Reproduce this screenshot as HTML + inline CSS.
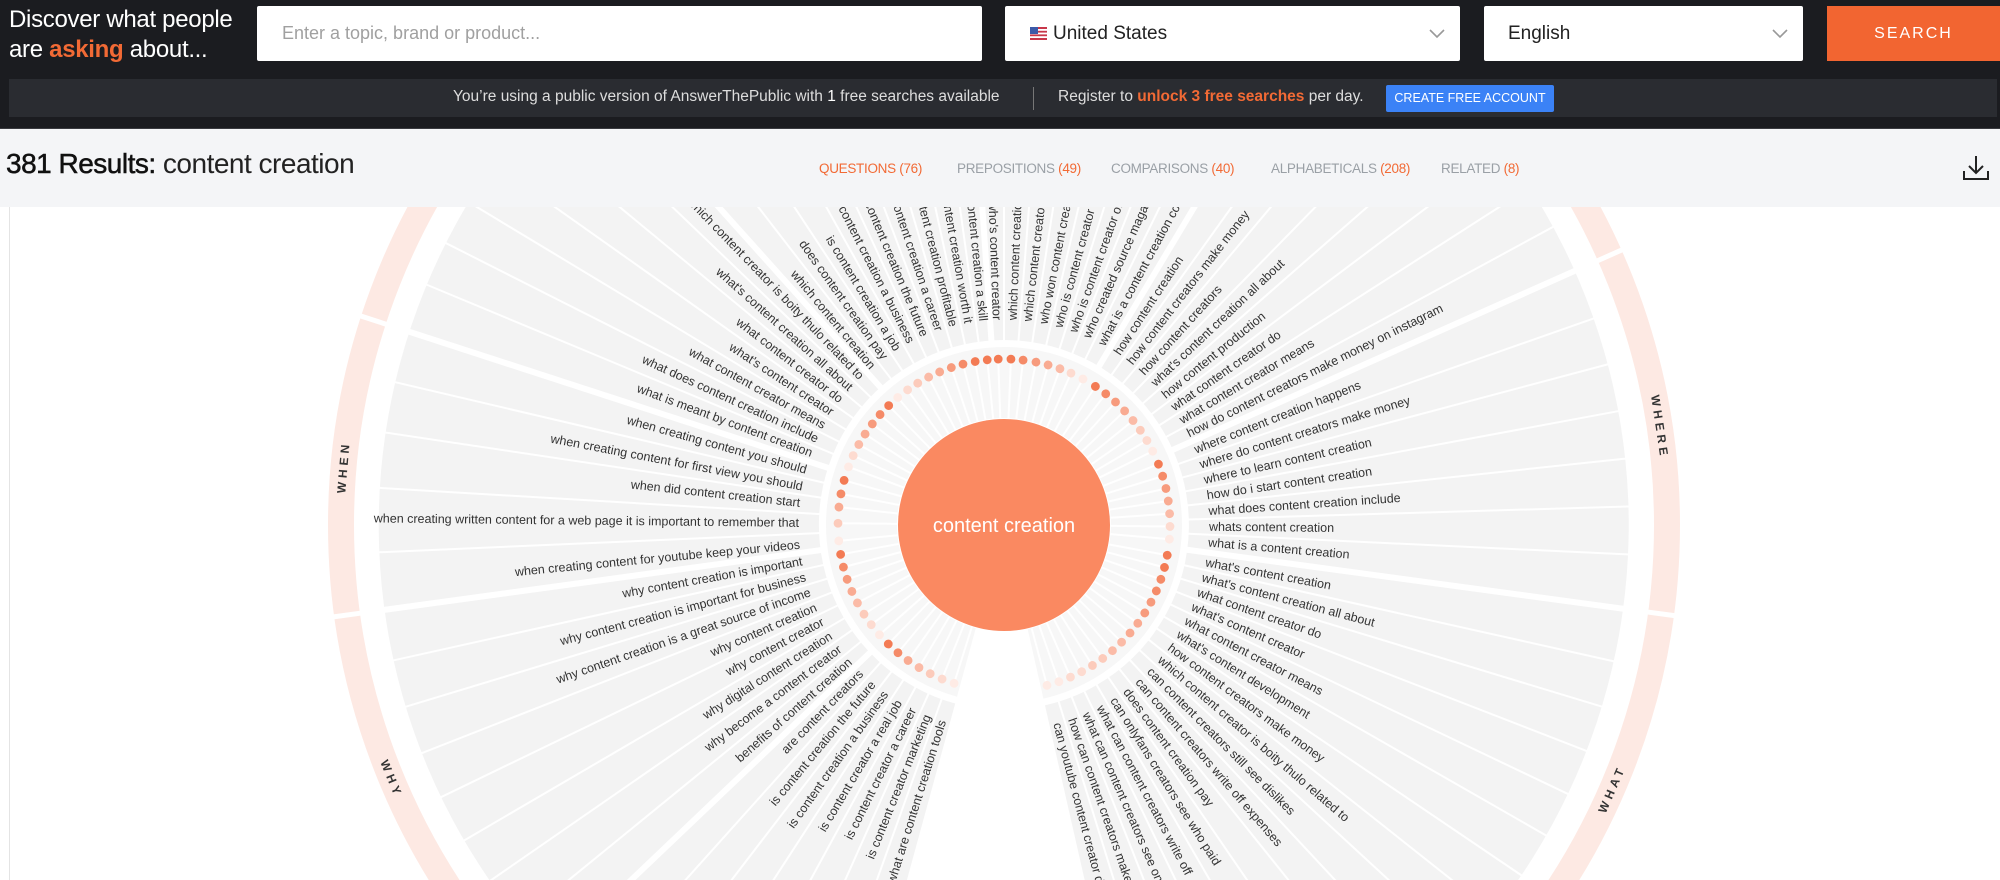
<!DOCTYPE html>
<html><head><meta charset="utf-8"><style>
*{margin:0;padding:0;box-sizing:border-box}
html,body{width:2000px;height:880px;overflow:hidden}
body{background:#fff;font-family:"Liberation Sans",sans-serif;position:relative}
.abs{position:absolute}
#hdr{left:0;top:0;width:2000px;height:128px;background:#1b1c20}
.box{background:#fff;border-radius:2px;top:6px;height:55px}
#info{left:9px;top:79px;width:1988px;height:38px;background:#2a2c31}
#sub{left:0;top:128px;width:2000px;height:79px;background:#f4f5f7;border-top:1px solid #3a3b40}
.tab{top:161px;font-size:13.5px;color:#9aa0a6;letter-spacing:-0.3px}
.tab b{font-weight:normal;color:#f26a35}
svg text{font-family:"Liberation Sans",sans-serif;font-size:12.5px;fill:#333}
svg text.l{text-anchor:end}
</style></head><body>
<div id="hdr" class="abs"></div>
<div class="abs" style="left:9px;top:5px;color:#fff;font-size:24px;line-height:30px;letter-spacing:-0.3px">Discover what people<br>are <span style="color:#f26a35;font-weight:bold">asking</span> about...</div>
<div class="abs box" style="left:257px;width:725px"><span class="abs" style="left:25px;top:17px;font-size:18px;color:#a0a0a0">Enter a topic, brand or product...</span></div>
<div class="abs box" style="left:1005px;width:455px">
<svg class="abs" style="left:25px;top:21px" width="17" height="13" viewBox="0 0 17 13"><rect width="17" height="13" fill="#c8374a"/><rect y="2" width="17" height="1.8" fill="#fff"/><rect y="5.6" width="17" height="1.8" fill="#fff"/><rect y="9.2" width="17" height="1.8" fill="#fff"/><rect width="8" height="7" fill="#3c5aa8"/></svg>
<span class="abs" style="left:48px;top:17px;font-size:19px;color:#222">United States</span>
<svg class="abs" style="left:424px;top:23px" width="16" height="10"><polyline points="1,1 8,8 15,1" fill="none" stroke="#999" stroke-width="1.6"/></svg></div>
<div class="abs box" style="left:1484px;width:319px"><span class="abs" style="left:24px;top:17px;font-size:19px;color:#222">English</span>
<svg class="abs" style="left:288px;top:23px" width="16" height="10"><polyline points="1,1 8,8 15,1" fill="none" stroke="#999" stroke-width="1.6"/></svg></div>
<div class="abs" style="left:1827px;top:6px;width:173px;height:55px;background:#f26531;color:#fff;font-size:16px;letter-spacing:2px;text-align:center;line-height:55px">SEARCH</div>
<div id="info" class="abs"></div>
<div class="abs" style="left:453px;top:88px;font-size:15.5px;color:#ddd">You’re using a public version of AnswerThePublic with <b style="color:#fff;font-weight:normal">1</b> free searches available</div>
<div class="abs" style="left:1033px;top:87px;width:1px;height:23px;background:#777"></div>
<div class="abs" style="left:1058px;top:88px;font-size:15.5px;color:#ddd">Register to <b style="color:#f26a35">unlock 3 free searches</b> per day.</div>
<div class="abs" style="left:1386px;top:85px;width:168px;height:27px;background:#3b82f6;border-radius:2px;color:#fff;font-size:12.5px;text-align:center;line-height:27px">CREATE FREE ACCOUNT</div>
<div id="sub" class="abs"></div>
<div class="abs" style="left:6px;top:148px;font-size:28px;color:#222;letter-spacing:-0.5px"><span style="color:#111;-webkit-text-stroke:0.5px #111">381 Results:</span> content creation</div>
<div class="abs tab" style="left:819px;color:#f26a35">QUESTIONS (76)</div>
<div class="abs tab" style="left:957px">PREPOSITIONS <b>(49)</b></div>
<div class="abs tab" style="left:1111px">COMPARISONS <b>(40)</b></div>
<div class="abs tab" style="left:1271px">ALPHABETICALS <b>(208)</b></div>
<div class="abs tab" style="left:1441px">RELATED <b>(8)</b></div>
<svg class="abs" style="left:1962px;top:154px" width="28" height="28"><path d="M14 2 V19 M7 12 L14 19 L21 12 M2 17 V25 H26 V17" fill="none" stroke="#222" stroke-width="2"/></svg>
<div class="abs" style="left:9px;top:207px;width:1px;height:673px;background:#e4e4e4"></div>

<svg class="abs" style="left:0;top:207px" width="2000" height="673" viewBox="0 207 2000 673">
<defs>
<line id="sep" x1="1184" y1="525" x2="1636" y2="525" stroke="#fff" stroke-width="2"/>
<line id="sepT" x1="1184" y1="525" x2="1636" y2="525" stroke="#fff" stroke-width="6"/>
<line id="sp" x1="1111" y1="525" x2="1166" y2="525" stroke="#fff" stroke-width="2"/>
<circle id="d" cx="1170" cy="525" r="4.4"/>
</defs>
<circle cx="1004" cy="525" r="663" fill="none" stroke="#fde9e3" stroke-width="26"/>
<g stroke="#fff" stroke-width="5">
<line x1="1650" y1="525" x2="1690" y2="525" transform="rotate(-24 1004 525)"/>
<line x1="1650" y1="525" x2="1690" y2="525" transform="rotate(7.7 1004 525)"/>
<line x1="1650" y1="525" x2="1690" y2="525" transform="rotate(172.2 1004 525)"/>
<line x1="1650" y1="525" x2="1690" y2="525" transform="rotate(198 1004 525)"/>
<line x1="1650" y1="525" x2="1690" y2="525" transform="rotate(-59.1 1004 525)"/>
<line x1="1650" y1="525" x2="1690" y2="525" transform="rotate(228.1 1004 525)"/>
<line x1="1650" y1="525" x2="1690" y2="525" transform="rotate(136.4 1004 525)"/>
</g>
<g>
<text x="343.5" y="471" text-anchor="middle" transform="rotate(-85 343.5 467)" style="font-size:12px;font-weight:bold;fill:#333;letter-spacing:4px">WHEN</text>
<text x="1659.7" y="431" text-anchor="middle" transform="rotate(81.5 1659.7 427)" style="font-size:12px;font-weight:bold;fill:#333;letter-spacing:4px">WHERE</text>
<text x="1612" y="793" text-anchor="middle" transform="rotate(-66.5 1612 789)" style="font-size:12px;font-weight:bold;fill:#333;letter-spacing:4px">WHAT</text>
<text x="391.5" y="783" text-anchor="middle" transform="rotate(67.5 391.5 779)" style="font-size:12px;font-weight:bold;fill:#333;letter-spacing:4px">WHY</text>
</g>
<path d="M839.1,1127.9 A625,625 0 1 1 1142.4,1134.4 L1045,705.4 A185,185 0 1 0 955.2,703.5 Z" fill="#f3f3f3"/>
<path d="M957,696.7 A178,178 0 1 1 1043.4,698.6 L1027.7,629.3 A107,107 0 1 0 975.8,628.2 Z" fill="#f7f7f7"/>
<g>
<use href="#sep" transform="rotate(-90 1004 525)"/><use href="#sep" transform="rotate(-85.5 1004 525)"/><use href="#sep" transform="rotate(-81.2 1004 525)"/><use href="#sep" transform="rotate(-76.8 1004 525)"/><use href="#sep" transform="rotate(-72.5 1004 525)"/><use href="#sep" transform="rotate(-68.3 1004 525)"/><use href="#sep" transform="rotate(-63.9 1004 525)"/>
<use href="#sepT" transform="rotate(-59.1 1004 525)"/>
<use href="#sep" transform="rotate(-54.4 1004 525)"/><use href="#sep" transform="rotate(-50 1004 525)"/><use href="#sep" transform="rotate(-45.6 1004 525)"/><use href="#sep" transform="rotate(-41.2 1004 525)"/><use href="#sep" transform="rotate(-36.9 1004 525)"/><use href="#sep" transform="rotate(-32.7 1004 525)"/><use href="#sep" transform="rotate(-28.5 1004 525)"/>
<use href="#sepT" transform="rotate(-24 1004 525)"/>
<use href="#sep" transform="rotate(-19.3 1004 525)"/><use href="#sep" transform="rotate(-14.9 1004 525)"/><use href="#sep" transform="rotate(-10.5 1004 525)"/><use href="#sep" transform="rotate(-6.1 1004 525)"/><use href="#sep" transform="rotate(-1.7 1004 525)"/><use href="#sep" transform="rotate(2.7 1004 525)"/>
<use href="#sepT" transform="rotate(7.7 1004 525)"/>
<use href="#sep" transform="rotate(12.6 1004 525)"/><use href="#sep" transform="rotate(16.9 1004 525)"/><use href="#sep" transform="rotate(21.2 1004 525)"/><use href="#sep" transform="rotate(25.5 1004 525)"/><use href="#sep" transform="rotate(29.8 1004 525)"/><use href="#sep" transform="rotate(34.1 1004 525)"/><use href="#sep" transform="rotate(38.4 1004 525)"/><use href="#sep" transform="rotate(42.7 1004 525)"/><use href="#sep" transform="rotate(47 1004 525)"/><use href="#sep" transform="rotate(51.3 1004 525)"/><use href="#sep" transform="rotate(55.6 1004 525)"/><use href="#sep" transform="rotate(59.9 1004 525)"/><use href="#sep" transform="rotate(64.2 1004 525)"/><use href="#sep" transform="rotate(68.5 1004 525)"/><use href="#sep" transform="rotate(72.8 1004 525)"/>
<use href="#sep" transform="rotate(109.7 1004 525)"/><use href="#sep" transform="rotate(114.1 1004 525)"/><use href="#sep" transform="rotate(118.6 1004 525)"/><use href="#sep" transform="rotate(123 1004 525)"/><use href="#sep" transform="rotate(127.5 1004 525)"/><use href="#sep" transform="rotate(131.9 1004 525)"/>
<use href="#sepT" transform="rotate(136.4 1004 525)"/>
<use href="#sep" transform="rotate(140.8 1004 525)"/><use href="#sep" transform="rotate(145.3 1004 525)"/><use href="#sep" transform="rotate(149.7 1004 525)"/><use href="#sep" transform="rotate(154.2 1004 525)"/><use href="#sep" transform="rotate(158.6 1004 525)"/><use href="#sep" transform="rotate(163.1 1004 525)"/><use href="#sep" transform="rotate(167.5 1004 525)"/>
<use href="#sepT" transform="rotate(172.2 1004 525)"/>
<use href="#sep" transform="rotate(177.5 1004 525)"/><use href="#sep" transform="rotate(183.4 1004 525)"/><use href="#sep" transform="rotate(188.5 1004 525)"/><use href="#sep" transform="rotate(193.2 1004 525)"/>
<use href="#sepT" transform="rotate(198 1004 525)"/>
<use href="#sep" transform="rotate(202.6 1004 525)"/><use href="#sep" transform="rotate(206.8 1004 525)"/><use href="#sep" transform="rotate(211.1 1004 525)"/><use href="#sep" transform="rotate(215.3 1004 525)"/><use href="#sep" transform="rotate(219.6 1004 525)"/><use href="#sep" transform="rotate(223.8 1004 525)"/>
<use href="#sepT" transform="rotate(228.1 1004 525)"/>
<use href="#sep" transform="rotate(232.3 1004 525)"/><use href="#sep" transform="rotate(236.6 1004 525)"/><use href="#sep" transform="rotate(240.8 1004 525)"/><use href="#sep" transform="rotate(245.1 1004 525)"/><use href="#sep" transform="rotate(249.3 1004 525)"/><use href="#sep" transform="rotate(253.6 1004 525)"/><use href="#sep" transform="rotate(257.8 1004 525)"/><use href="#sep" transform="rotate(262.1 1004 525)"/>
<use href="#sepT" transform="rotate(266.1 1004 525)"/>
</g>
<g>
<use href="#sp" transform="rotate(268 1004 525)"/><use href="#sp" transform="rotate(-87.6 1004 525)"/><use href="#sp" transform="rotate(-83.4 1004 525)"/><use href="#sp" transform="rotate(-78.9 1004 525)"/><use href="#sp" transform="rotate(-74.6 1004 525)"/><use href="#sp" transform="rotate(-70.3 1004 525)"/><use href="#sp" transform="rotate(-66.2 1004 525)"/><use href="#sp" transform="rotate(-61.6 1004 525)"/>
<use href="#sp" transform="rotate(-56.6 1004 525)"/><use href="#sp" transform="rotate(-52.2 1004 525)"/><use href="#sp" transform="rotate(-47.8 1004 525)"/><use href="#sp" transform="rotate(-43.4 1004 525)"/><use href="#sp" transform="rotate(-39 1004 525)"/><use href="#sp" transform="rotate(-34.8 1004 525)"/><use href="#sp" transform="rotate(-30.6 1004 525)"/><use href="#sp" transform="rotate(-26.4 1004 525)"/>
<use href="#sp" transform="rotate(-21.5 1004 525)"/><use href="#sp" transform="rotate(-17.1 1004 525)"/><use href="#sp" transform="rotate(-12.7 1004 525)"/><use href="#sp" transform="rotate(-8.3 1004 525)"/><use href="#sp" transform="rotate(-3.9 1004 525)"/><use href="#sp" transform="rotate(0.5 1004 525)"/><use href="#sp" transform="rotate(4.9 1004 525)"/>
<use href="#sp" transform="rotate(10.5 1004 525)"/><use href="#sp" transform="rotate(14.8 1004 525)"/><use href="#sp" transform="rotate(19.1 1004 525)"/><use href="#sp" transform="rotate(23.4 1004 525)"/><use href="#sp" transform="rotate(27.7 1004 525)"/><use href="#sp" transform="rotate(32 1004 525)"/><use href="#sp" transform="rotate(36.3 1004 525)"/><use href="#sp" transform="rotate(40.6 1004 525)"/><use href="#sp" transform="rotate(44.9 1004 525)"/><use href="#sp" transform="rotate(49.2 1004 525)"/><use href="#sp" transform="rotate(53.5 1004 525)"/><use href="#sp" transform="rotate(57.8 1004 525)"/><use href="#sp" transform="rotate(62.1 1004 525)"/><use href="#sp" transform="rotate(66.4 1004 525)"/><use href="#sp" transform="rotate(70.7 1004 525)"/><use href="#sp" transform="rotate(75 1004 525)"/>
<use href="#sp" transform="rotate(107.5 1004 525)"/><use href="#sp" transform="rotate(111.9 1004 525)"/><use href="#sp" transform="rotate(116.4 1004 525)"/><use href="#sp" transform="rotate(120.8 1004 525)"/><use href="#sp" transform="rotate(125.3 1004 525)"/><use href="#sp" transform="rotate(129.7 1004 525)"/><use href="#sp" transform="rotate(134.2 1004 525)"/>
<use href="#sp" transform="rotate(138.6 1004 525)"/><use href="#sp" transform="rotate(143.1 1004 525)"/><use href="#sp" transform="rotate(147.5 1004 525)"/><use href="#sp" transform="rotate(152 1004 525)"/><use href="#sp" transform="rotate(156.4 1004 525)"/><use href="#sp" transform="rotate(160.9 1004 525)"/><use href="#sp" transform="rotate(165.3 1004 525)"/><use href="#sp" transform="rotate(169.8 1004 525)"/>
<use href="#sp" transform="rotate(174.5 1004 525)"/><use href="#sp" transform="rotate(180.6 1004 525)"/><use href="#sp" transform="rotate(186.2 1004 525)"/><use href="#sp" transform="rotate(190.8 1004 525)"/><use href="#sp" transform="rotate(195.6 1004 525)"/>
<use href="#sp" transform="rotate(200.5 1004 525)"/><use href="#sp" transform="rotate(204.7 1004 525)"/><use href="#sp" transform="rotate(209 1004 525)"/><use href="#sp" transform="rotate(213.2 1004 525)"/><use href="#sp" transform="rotate(217.5 1004 525)"/><use href="#sp" transform="rotate(221.7 1004 525)"/><use href="#sp" transform="rotate(226 1004 525)"/>
<use href="#sp" transform="rotate(230.2 1004 525)"/><use href="#sp" transform="rotate(234.5 1004 525)"/><use href="#sp" transform="rotate(238.7 1004 525)"/><use href="#sp" transform="rotate(243 1004 525)"/><use href="#sp" transform="rotate(247.2 1004 525)"/><use href="#sp" transform="rotate(251.5 1004 525)"/><use href="#sp" transform="rotate(255.7 1004 525)"/><use href="#sp" transform="rotate(260 1004 525)"/><use href="#sp" transform="rotate(264.2 1004 525)"/>
</g>
<g>
<use href="#d" fill="#f37b54" transform="rotate(268 1004 525)"/><use href="#d" fill="#f37b54" transform="rotate(-87.6 1004 525)"/><use href="#d" fill="#f58b68" transform="rotate(-83.4 1004 525)"/><use href="#d" fill="#f79b7d" transform="rotate(-78.9 1004 525)"/><use href="#d" fill="#f9ab92" transform="rotate(-74.6 1004 525)"/><use href="#d" fill="#fbbba7" transform="rotate(-70.3 1004 525)"/><use href="#d" fill="#fddbd0" transform="rotate(-66.2 1004 525)"/><use href="#d" fill="#feebe5" transform="rotate(-61.6 1004 525)"/>
<use href="#d" fill="#f37b54" transform="rotate(-56.6 1004 525)"/><use href="#d" fill="#f58b68" transform="rotate(-52.2 1004 525)"/><use href="#d" fill="#f79b7d" transform="rotate(-47.8 1004 525)"/><use href="#d" fill="#f9ab92" transform="rotate(-43.4 1004 525)"/><use href="#d" fill="#fbbba7" transform="rotate(-39 1004 525)"/><use href="#d" fill="#fccbbb" transform="rotate(-34.8 1004 525)"/><use href="#d" fill="#fddbd0" transform="rotate(-30.6 1004 525)"/><use href="#d" fill="#feebe5" transform="rotate(-26.4 1004 525)"/>
<use href="#d" fill="#f37b54" transform="rotate(-21.5 1004 525)"/><use href="#d" fill="#f58b68" transform="rotate(-17.1 1004 525)"/><use href="#d" fill="#f79b7d" transform="rotate(-12.7 1004 525)"/><use href="#d" fill="#f9ab92" transform="rotate(-8.3 1004 525)"/><use href="#d" fill="#fbbba7" transform="rotate(-3.9 1004 525)"/><use href="#d" fill="#fddbd0" transform="rotate(0.5 1004 525)"/><use href="#d" fill="#feebe5" transform="rotate(4.9 1004 525)"/>
<use href="#d" fill="#f37b54" transform="rotate(10.5 1004 525)"/><use href="#d" fill="#f37b54" transform="rotate(14.8 1004 525)"/><use href="#d" fill="#f58b68" transform="rotate(19.1 1004 525)"/><use href="#d" fill="#f58b68" transform="rotate(23.4 1004 525)"/><use href="#d" fill="#f79b7d" transform="rotate(27.7 1004 525)"/><use href="#d" fill="#f79b7d" transform="rotate(32 1004 525)"/><use href="#d" fill="#f9ab92" transform="rotate(36.3 1004 525)"/><use href="#d" fill="#f9ab92" transform="rotate(40.6 1004 525)"/><use href="#d" fill="#fbbba7" transform="rotate(44.9 1004 525)"/><use href="#d" fill="#fbbba7" transform="rotate(49.2 1004 525)"/><use href="#d" fill="#fccbbb" transform="rotate(53.5 1004 525)"/><use href="#d" fill="#fccbbb" transform="rotate(57.8 1004 525)"/><use href="#d" fill="#fddbd0" transform="rotate(62.1 1004 525)"/><use href="#d" fill="#fddbd0" transform="rotate(66.4 1004 525)"/><use href="#d" fill="#feebe5" transform="rotate(70.7 1004 525)"/><use href="#d" fill="#feebe5" transform="rotate(75 1004 525)"/>
<use href="#d" fill="#feebe5" transform="rotate(107.5 1004 525)"/><use href="#d" fill="#fddbd0" transform="rotate(111.9 1004 525)"/><use href="#d" fill="#fccbbb" transform="rotate(116.4 1004 525)"/><use href="#d" fill="#fbbba7" transform="rotate(120.8 1004 525)"/><use href="#d" fill="#f9ab92" transform="rotate(125.3 1004 525)"/><use href="#d" fill="#f58b68" transform="rotate(129.7 1004 525)"/><use href="#d" fill="#f37b54" transform="rotate(134.2 1004 525)"/>
<use href="#d" fill="#feebe5" transform="rotate(138.6 1004 525)"/><use href="#d" fill="#fddbd0" transform="rotate(143.1 1004 525)"/><use href="#d" fill="#fccbbb" transform="rotate(147.5 1004 525)"/><use href="#d" fill="#fbbba7" transform="rotate(152 1004 525)"/><use href="#d" fill="#f9ab92" transform="rotate(156.4 1004 525)"/><use href="#d" fill="#f79b7d" transform="rotate(160.9 1004 525)"/><use href="#d" fill="#f58b68" transform="rotate(165.3 1004 525)"/><use href="#d" fill="#f37b54" transform="rotate(169.8 1004 525)"/>
<use href="#d" fill="#feebe5" transform="rotate(174.5 1004 525)"/><use href="#d" fill="#fccbbb" transform="rotate(180.6 1004 525)"/><use href="#d" fill="#f9ab92" transform="rotate(186.2 1004 525)"/><use href="#d" fill="#f58b68" transform="rotate(190.8 1004 525)"/><use href="#d" fill="#f37b54" transform="rotate(195.6 1004 525)"/>
<use href="#d" fill="#feebe5" transform="rotate(200.5 1004 525)"/><use href="#d" fill="#fddbd0" transform="rotate(204.7 1004 525)"/><use href="#d" fill="#fbbba7" transform="rotate(209 1004 525)"/><use href="#d" fill="#f9ab92" transform="rotate(213.2 1004 525)"/><use href="#d" fill="#f79b7d" transform="rotate(217.5 1004 525)"/><use href="#d" fill="#f58b68" transform="rotate(221.7 1004 525)"/><use href="#d" fill="#f37b54" transform="rotate(226 1004 525)"/>
<use href="#d" fill="#feebe5" transform="rotate(230.2 1004 525)"/><use href="#d" fill="#fddbd0" transform="rotate(234.5 1004 525)"/><use href="#d" fill="#fccbbb" transform="rotate(238.7 1004 525)"/><use href="#d" fill="#fbbba7" transform="rotate(243 1004 525)"/><use href="#d" fill="#f9ab92" transform="rotate(247.2 1004 525)"/><use href="#d" fill="#f79b7d" transform="rotate(251.5 1004 525)"/><use href="#d" fill="#f58b68" transform="rotate(255.7 1004 525)"/><use href="#d" fill="#f37b54" transform="rotate(260 1004 525)"/><use href="#d" fill="#f37b54" transform="rotate(264.2 1004 525)"/>
</g>
<circle cx="1004" cy="525" r="106" fill="#fa8961"/>
<text x="1004" y="532" text-anchor="middle" style="font-size:20px;fill:#fff">content creation</text>
<g>
<text x="1209" y="529" transform="rotate(-87.6 1004 525)">which content creation</text>
<text x="1209" y="529" transform="rotate(-83.4 1004 525)">which content creator</text>
<text x="1209" y="529" transform="rotate(-78.9 1004 525)">who won content creator of the year</text>
<text x="1209" y="529" transform="rotate(-74.6 1004 525)">who is content creator cards</text>
<text x="1209" y="529" transform="rotate(-70.3 1004 525)">who is content creator of the year</text>
<text x="1209" y="529" transform="rotate(-66.2 1004 525)">who created source magazine</text>
<text x="1209" y="529" transform="rotate(-61.6 1004 525)">what is a content creation company</text>
<text x="1209" y="529" transform="rotate(-56.6 1004 525)">how content creation</text>
<text x="1209" y="529" transform="rotate(-52.2 1004 525)">how content creators make money</text>
<text x="1209" y="529" transform="rotate(-47.8 1004 525)">how content creators</text>
<text x="1209" y="529" transform="rotate(-43.4 1004 525)">what's content creation all about</text>
<text x="1209" y="529" transform="rotate(-39 1004 525)">how content production</text>
<text x="1209" y="529" transform="rotate(-34.8 1004 525)">what content creator do</text>
<text x="1209" y="529" transform="rotate(-30.6 1004 525)">what content creator means</text>
<text x="1209" y="529" transform="rotate(-26.4 1004 525)">how do content creators make money on instagram</text>
<text x="1209" y="529" transform="rotate(-21.5 1004 525)">where content creation happens</text>
<text x="1209" y="529" transform="rotate(-17.1 1004 525)">where do content creators make money</text>
<text x="1209" y="529" transform="rotate(-12.7 1004 525)">where to learn content creation</text>
<text x="1209" y="529" transform="rotate(-8.3 1004 525)">how do i start content creation</text>
<text x="1209" y="529" transform="rotate(-3.9 1004 525)">what does content creation include</text>
<text x="1209" y="529" transform="rotate(0.5 1004 525)">whats content creation</text>
<text x="1209" y="529" transform="rotate(4.9 1004 525)">what is a content creation</text>
<text x="1209" y="529" transform="rotate(10.5 1004 525)">what's content creation</text>
<text x="1209" y="529" transform="rotate(14.8 1004 525)">what's content creation all about</text>
<text x="1209" y="529" transform="rotate(19.1 1004 525)">what content creator do</text>
<text x="1209" y="529" transform="rotate(23.4 1004 525)">what's content creator</text>
<text x="1209" y="529" transform="rotate(27.7 1004 525)">what content creator means</text>
<text x="1209" y="529" transform="rotate(32 1004 525)">what's content development</text>
<text x="1209" y="529" transform="rotate(36.3 1004 525)">how content creators make money</text>
<text x="1209" y="529" transform="rotate(40.6 1004 525)">which content creator is boity thulo related to</text>
<text x="1209" y="529" transform="rotate(44.9 1004 525)">can content creators still see dislikes</text>
<text x="1209" y="529" transform="rotate(49.2 1004 525)">can content creators write off expenses</text>
<text x="1209" y="529" transform="rotate(53.5 1004 525)">does content creation pay</text>
<text x="1209" y="529" transform="rotate(57.8 1004 525)">can onlyfans creators see who paid</text>
<text x="1209" y="529" transform="rotate(62.1 1004 525)">what can content creators write off</text>
<text x="1209" y="529" transform="rotate(66.4 1004 525)">what can content creators see on youtube</text>
<text x="1209" y="529" transform="rotate(70.7 1004 525)">how can content creators make money</text>
<text x="1209" y="529" transform="rotate(75 1004 525)">can youtube content creator delete comments</text>

<text class="l" x="799" y="529" transform="rotate(-72.5 1004 525)">what are content creation tools</text>
<text class="l" x="799" y="529" transform="rotate(-68.1 1004 525)">is content creator marketing</text>
<text class="l" x="799" y="529" transform="rotate(-63.6 1004 525)">is content creator a career</text>
<text class="l" x="799" y="529" transform="rotate(-59.2 1004 525)">is content creator a real job</text>
<text class="l" x="799" y="529" transform="rotate(-54.7 1004 525)">is content creation a business</text>
<text class="l" x="799" y="529" transform="rotate(-50.3 1004 525)">is content creation the future</text>
<text class="l" x="799" y="529" transform="rotate(-45.8 1004 525)">are content creators</text>
<text class="l" x="799" y="529" transform="rotate(-41.4 1004 525)">benefits of content creation</text>
<text class="l" x="799" y="529" transform="rotate(-36.9 1004 525)">why become a content creator</text>
<text class="l" x="799" y="529" transform="rotate(-32.5 1004 525)">why digital content creation</text>
<text class="l" x="799" y="529" transform="rotate(-28 1004 525)">why content creator</text>
<text class="l" x="799" y="529" transform="rotate(-23.6 1004 525)">why content creation</text>
<text class="l" x="799" y="529" transform="rotate(-19.1 1004 525)">why content creation is a great source of income</text>
<text class="l" x="799" y="529" transform="rotate(-14.7 1004 525)">why content creation is important for business</text>
<text class="l" x="799" y="529" transform="rotate(-10.2 1004 525)">why content creation is important</text>
<text class="l" x="799" y="529" transform="rotate(-5.5 1004 525)">when creating content for youtube keep your videos</text>
<text class="l" x="799" y="529" transform="rotate(0.6 1004 525)">when creating written content for a web page it is important to remember that</text>
<text class="l" x="799" y="529" transform="rotate(6.2 1004 525)">when did content creation start</text>
<text class="l" x="799" y="529" transform="rotate(10.8 1004 525)">when creating content for first view you should</text>
<text class="l" x="799" y="529" transform="rotate(15.6 1004 525)">when creating content you should</text>
<text class="l" x="799" y="529" transform="rotate(20.5 1004 525)">what is meant by content creation</text>
<text class="l" x="799" y="529" transform="rotate(24.7 1004 525)">what does content creation include</text>
<text class="l" x="799" y="529" transform="rotate(29 1004 525)">what content creator means</text>
<text class="l" x="799" y="529" transform="rotate(33.2 1004 525)">what's content creator</text>
<text class="l" x="799" y="529" transform="rotate(37.5 1004 525)">what content creator do</text>
<text class="l" x="799" y="529" transform="rotate(41.7 1004 525)">what's content creation all about</text>
<text class="l" x="799" y="529" transform="rotate(46 1004 525)">which content creator is boity thulo related to</text>
<text class="l" x="799" y="529" transform="rotate(50.2 1004 525)">which content creation</text>
<text class="l" x="799" y="529" transform="rotate(54.5 1004 525)">does content creation pay</text>
<text class="l" x="799" y="529" transform="rotate(58.7 1004 525)">is content creation a job</text>
<text class="l" x="799" y="529" transform="rotate(63 1004 525)">is content creation a business</text>
<text class="l" x="799" y="529" transform="rotate(67.2 1004 525)">is content creation the future</text>
<text class="l" x="799" y="529" transform="rotate(71.5 1004 525)">is content creation a career</text>
<text class="l" x="799" y="529" transform="rotate(75.7 1004 525)">is content creation profitable</text>
<text class="l" x="799" y="529" transform="rotate(80 1004 525)">is content creation worth it</text>
<text class="l" x="799" y="529" transform="rotate(84.2 1004 525)">is content creation a skill</text>
<text class="l" x="799" y="529" transform="rotate(88 1004 525)">who's content creator</text>
</g>
</svg>
</body></html>
